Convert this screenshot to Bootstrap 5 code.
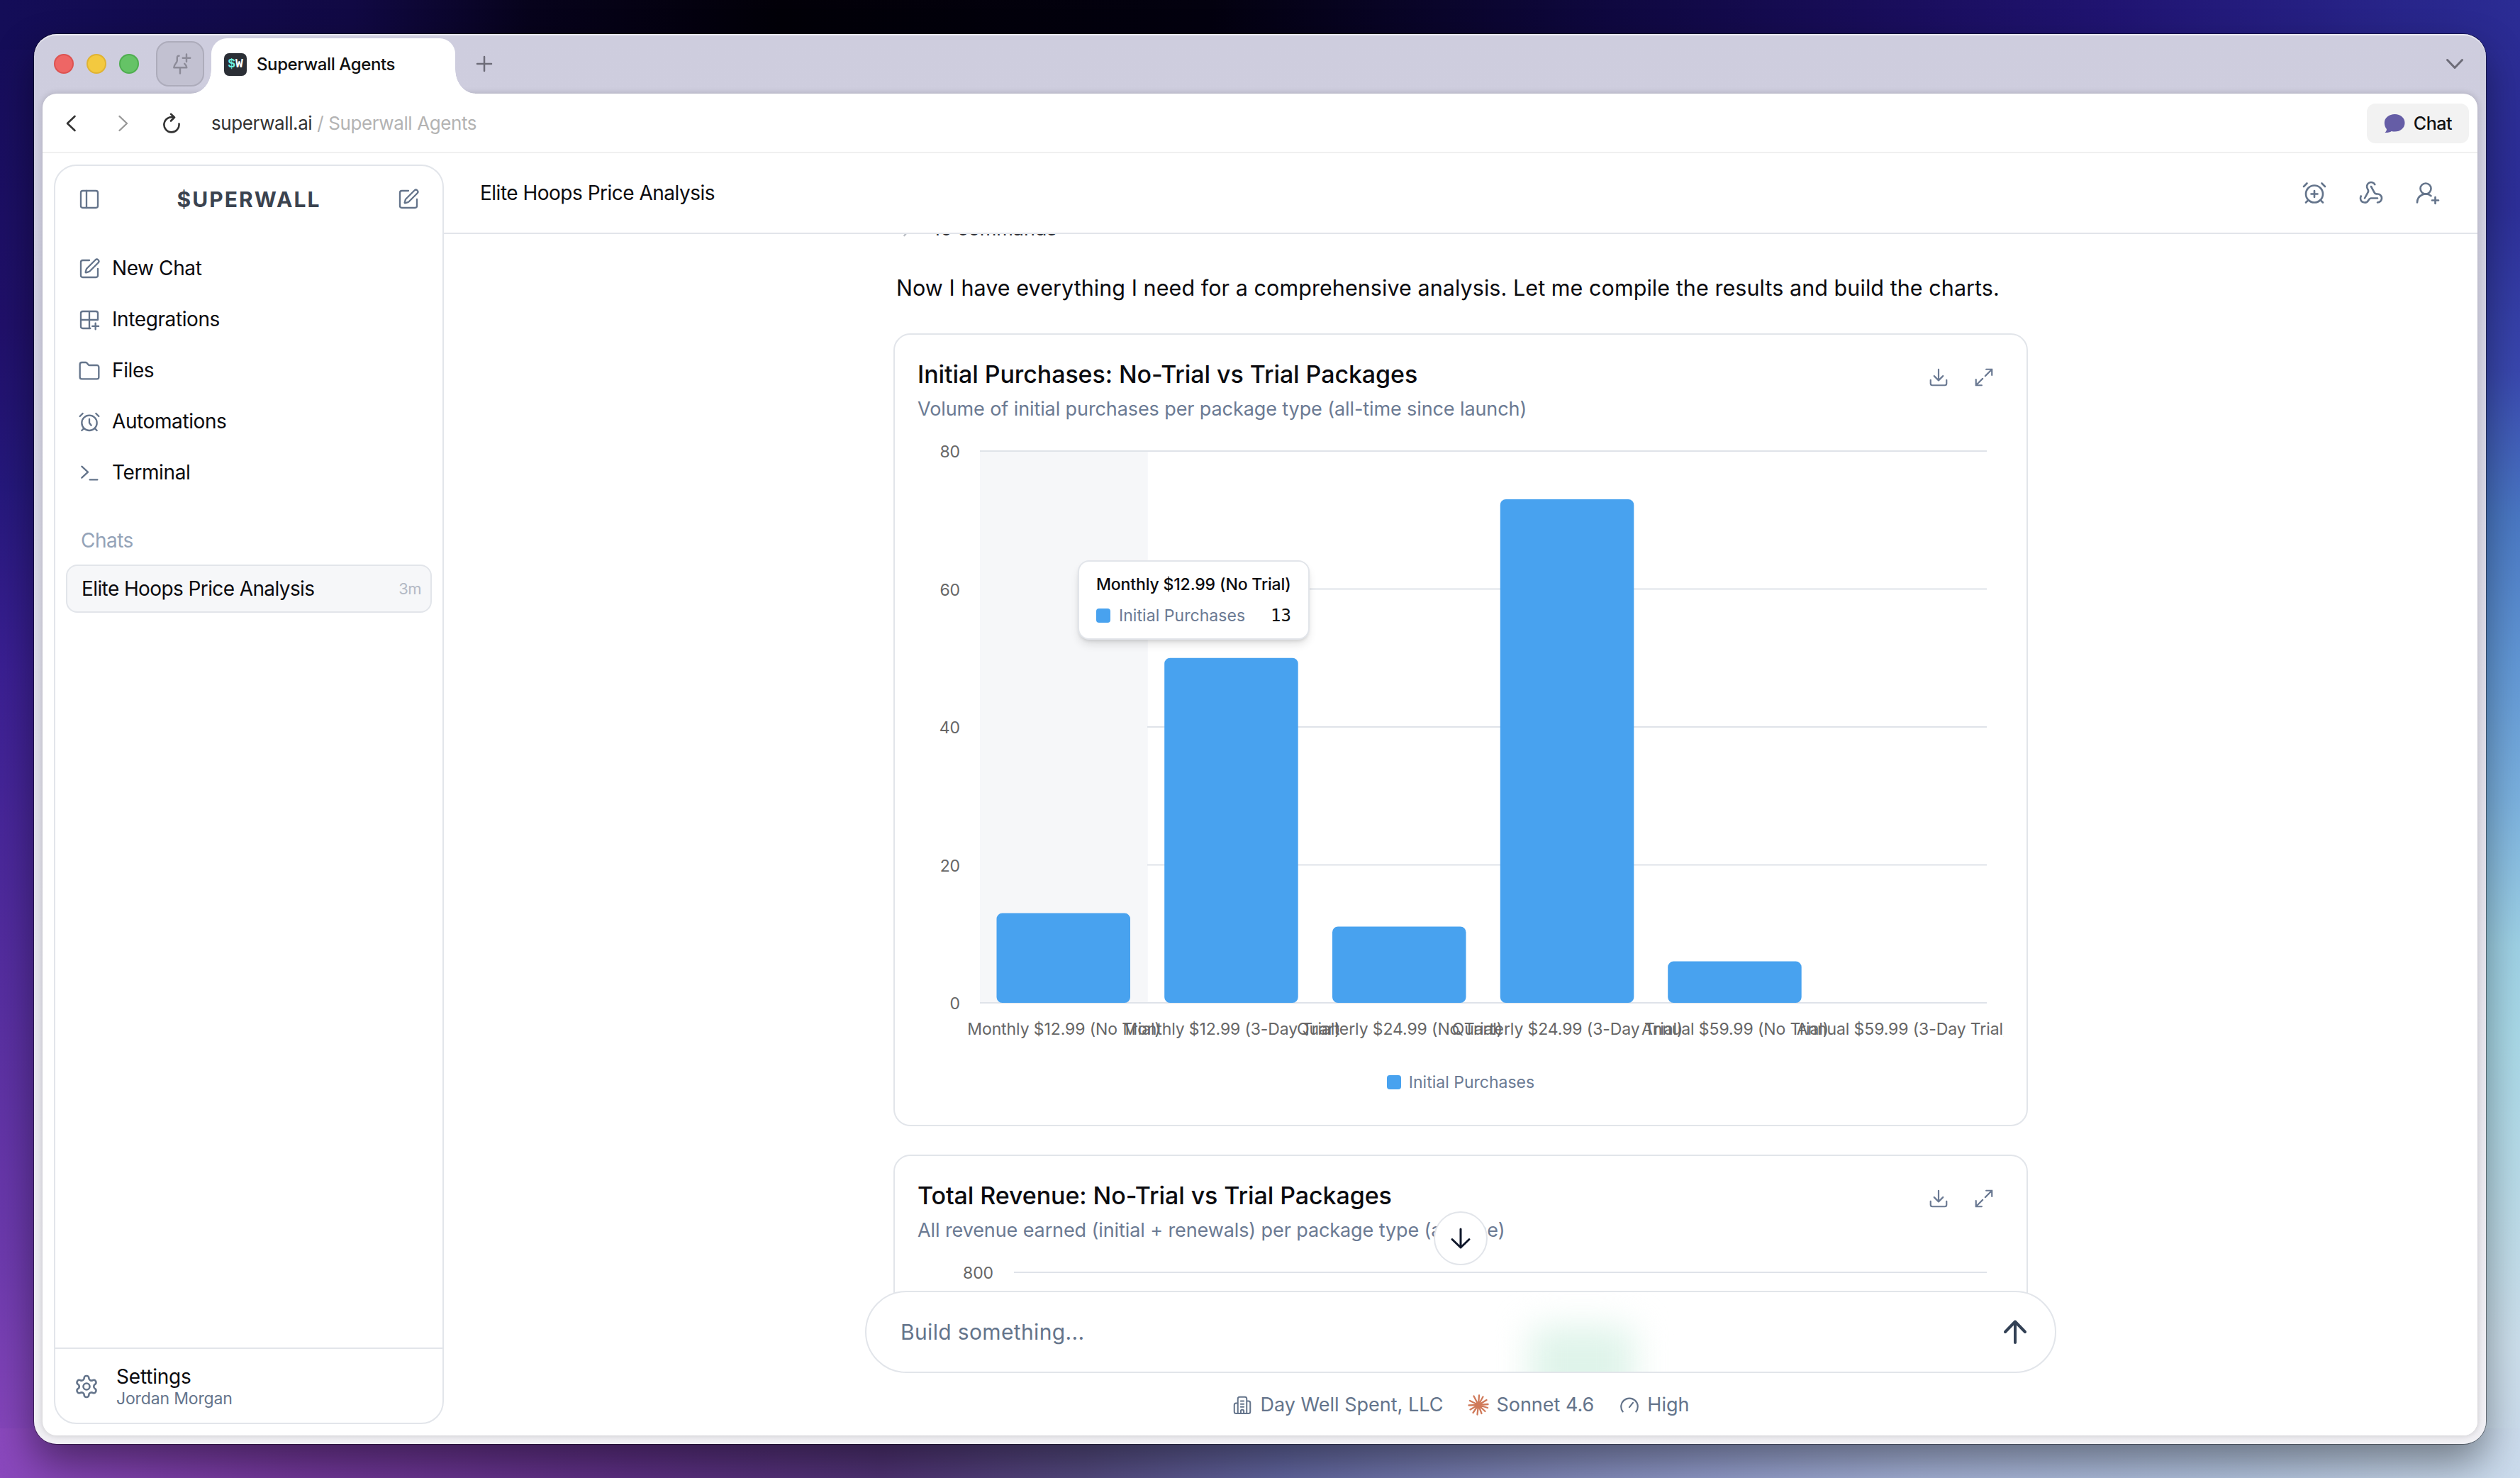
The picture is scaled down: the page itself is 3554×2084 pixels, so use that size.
<!DOCTYPE html>
<html lang="en">
<head>
<meta charset="utf-8">
<title>Superwall Agents</title>
<link href="https://cdn.jsdelivr.net/npm/bootstrap@5.3.0/dist/css/bootstrap.min.css" rel="stylesheet">
<style>
:root{--line:#e2e5ea;--slate:#64748b;--ink:#0b0b0f}
html,body{height:100%;overflow:hidden}
body{font-family:Inter,"Liberation Sans",sans-serif;color:var(--ink);font-size:28px;line-height:1.3;letter-spacing:-.5px;
background:
 linear-gradient(90deg,#140d58 0,#110944 14%,#07031c 21%,#020008 31%,#03010f 48%,#0f0840 64%,#1a0e5e 76%,#201472 84%,#2b2c94 100%) top/100% 70px no-repeat,
 linear-gradient(90deg,#8a48bd 0,#74389c 11%,#5d2f84 25%,#4f3274 35%,#544a80 43%,#6266a0 51%,#7d84b6 60%,#929ccb 68%,#a5b2d8 76%,#b3c4e0 88%,#cbdbec 100%) bottom/100% 70px no-repeat,
 linear-gradient(180deg,#140d58 0,#20106a 22%,#25187c 33%,#3a1f92 45%,#5a30a2 70%,#6d3aad 85%,#8a48bd 100%) left/70px 100% no-repeat,
 linear-gradient(180deg,#2b2c94 0,#2d2f99 14%,#3947ae 25%,#4a78c4 35%,#6298d6 45%,#7bb1df 54%,#9fd2e6 64%,#a9d9e8 70%,#bcdce9 82%,#ccdfec 91%,#cbdbec 100%) right/70px 100% no-repeat,#222}
svg{display:block;flex:none}
.ico{fill:none;stroke:currentColor;stroke-width:1.75;stroke-linecap:round;stroke-linejoin:round}
.win{margin:48px;width:3458px;height:1988px;border-radius:32px;background:linear-gradient(180deg,#cecdde 0,#cfcedf 20%,#dedde7 55%,#f1f0f4 100%);
 box-shadow:inset 0 2px 0 rgba(255,255,255,.55),0 0 0 1px rgba(0,0,0,.4),0 26px 56px rgba(0,0,0,.42)}
.tabbar{height:84px;padding:0 28px}
.light{width:28px;height:28px;border-radius:50%;margin-right:18px}
.pin{width:68px;height:64px;margin-left:6px;border-radius:18px;background:#c2c1d1;border:2px solid #adacbb;color:#8c8b98}
.tab{width:344px;height:78px;margin:6px 0 0 10px;padding:0 18px 5px;background:#fff;border-radius:22px 22px 0 0;font-size:24px;font-weight:500;letter-spacing:-.4px;color:#111}
.tab:before,.tab:after{content:"";position:absolute;bottom:0;width:28px;height:34px}
.tab:before{left:-28px;background:radial-gradient(ellipse 28px 34px at 0 0,transparent 98%,#fff 100%)}
.tab:after{right:-28px;background:radial-gradient(ellipse 28px 34px at 100% 0,transparent 98%,#fff 100%)}
.fav{width:32px;height:32px;border-radius:7px;background:#2b2f36;color:#fff;font:700 18px/31px "Liberation Mono",monospace;letter-spacing:0;margin-right:6px}
.fav b{color:#6df0e0}
.page{margin:0 12px 12px;border-radius:20px;background:#fff;box-shadow:0 0 10px rgba(0,0,0,.18)}
.urlbar{height:84px;border-bottom:2px solid #f0f0f0;font-size:26px;letter-spacing:-.4px;padding:2px 12px 0 26px;color:#333;flex:none}
.url-muted{color:#b3b3b3}
.chatbtn{width:144px;height:56px;border-radius:12px;background:#f2f2f2;font-size:25px;font-weight:500;color:#111}
.side{width:550px;margin:16px 0;border:2px solid var(--line);border-radius:32px;flex:none}
.side-top{height:94px;padding:0 32px;color:var(--slate)}
.logo{font-size:30px;font-weight:700;letter-spacing:2.1px;color:#3b434f}
.nav-row{height:72px;padding:1px 0 0 32px;gap:16px;letter-spacing:-.4px}
.nav-row svg{color:var(--slate)}
.chats-lbl{height:48px;margin-top:36px;padding:1px 0 0 36px;color:#94a3b8}
.chat-item{height:68px;margin:10px 15px 0;padding:0 13px 0 20px;border:2px solid var(--line);border-radius:16px;background:#f6f7f9;letter-spacing:-.6px}
.ago{font-size:22px;color:#b4bac5}
.side-foot{height:106px;border-top:2px solid var(--line);padding:1px 0 0 26px;gap:24px;color:var(--slate)}
.user-nm{font-size:23px;line-height:28px;letter-spacing:-.15px}
.top{height:114px;border-bottom:2px solid var(--line);padding:0 52px 0 51px;flex:none}
.top-ic{gap:44px;color:var(--slate)}
.thread{overflow:hidden}
.col-main{width:1600px;margin:0 auto}
.cmds{height:36px;line-height:36px;margin-top:-25px;font-size:27px;color:#303136;gap:25px;padding-left:8px;letter-spacing:-.1px}
.msg{height:48px;line-height:48px;margin:41px 0 40px 4px;font-size:30.5px;letter-spacing:.06px;white-space:nowrap}
.ccard{border:2px solid var(--line);border-radius:24px;margin-bottom:40px;background:#fff}
.chead{height:128px;padding:34px 45px 0 32px}
.ctitle{font-size:34px;line-height:44px;font-weight:450;letter-spacing:-.08px}
.csub{font-size:27px;line-height:36px;margin-top:9px;color:#6b7a93;letter-spacing:-.1px}
.cact{gap:34px;padding-top:11px;color:#6b7a93}
.ax{font:23px Inter,sans-serif;letter-spacing:-.1px;fill:#666}
.gl{stroke:#dfe3e9;stroke-width:2}
.legend{height:86px;padding-top:6px;font-size:23px;letter-spacing:0;color:#6b7a93;gap:11px;line-height:40px}
.sw{width:20px;height:20px;border-radius:4px;background:#48a2ef;display:inline-block}
.tip{left:258px;top:318px;width:327px;height:112px;border:2px solid var(--line);border-radius:16px;background:#fff;padding:13px 24px 0 24px;font-size:23px;box-shadow:0 8px 14px -3px rgba(0,0,0,.14),0 3px 5px -2px rgba(0,0,0,.12)}
.tip-t{font-weight:500;line-height:38px;letter-spacing:-.15px}
.tip-r{line-height:44px;color:#6b7a93;letter-spacing:.05px;gap:12px;margin-top:3px}
.tip-v{font-family:"DejaVu Sans Mono",monospace;font-size:24px;color:#111}
.dock{height:146px;background:#fff;flex:none}
.pill{width:1680px;height:116px;margin:-58px auto 0;border:2px solid var(--line);border-radius:58px;overflow:hidden;
 background:#fff;padding:0 36px 0 48px;font-size:30px;letter-spacing:.35px;color:#64748b}
.glow{left:936px;top:48px;width:146px;height:120px;border-radius:16px;background:#dff4ea;filter:blur(24px)}
.down{width:76px;height:76px;left:50%;bottom:240px;transform:translateX(-50%);border:2px solid var(--line);background:#fff;color:#0f172a}
.meta{height:40px;margin-top:25px;gap:35px;color:var(--slate);font-size:27px;letter-spacing:0}
.meta span{gap:10px}
</style>
<script src="https://cdn.jsdelivr.net/npm/bootstrap@5.3.0/dist/js/bootstrap.bundle.min.js"></script>
</head>
<body>
<svg width="0" height="0" class="position-absolute">
 <defs>
 <symbol id="edit" viewBox="0 0 24 24"><path d="M12 3H5a2 2 0 0 0-2 2v14a2 2 0 0 0 2 2h14a2 2 0 0 0 2-2v-7M18.375 2.625a1 1 0 0 1 3 3l-9.013 9.014a2 2 0 0 1-.853.505l-2.873.84a.5.5 0 0 1-.62-.62l.84-2.873a2 2 0 0 1 .506-.852z"/></symbol>
 <symbol id="dl" viewBox="0 0 24 24"><path d="M12 3v12M7 10.500l5 5 5-5M3 15v4a2 2 0 0 0 2 2h14a2 2 0 0 0 2-2v-4"/></symbol>
 <symbol id="ex" viewBox="0 0 24 24"><path d="M14.500 3H21v6.500M21 3l-7.500 7.500M9.500 21H3v-6.500M3 21l7.500-7.500"/></symbol>
 <symbol id="clock" viewBox="0 0 24 24"><circle cx="12" cy="13" r="8"/><path d="M5 3 2 6M22 6l-3-3M6.380 18.700 4 21M17.640 18.670 20 21"/></symbol>
 </defs>
</svg>
<div class="win d-flex flex-column">
 <div class="tabbar d-flex align-items-center flex-shrink-0">
  <div class="light" style="background:#ee6665;border:2px solid #dd5351"></div>
  <div class="light" style="background:#f3c93f;border:2px solid #e0b332"></div>
  <div class="light" style="background:#65c366;border:2px solid #4fae50"></div>
  <div class="pin d-flex align-items-center justify-content-center">
   <svg class="ico" width="36" height="36" viewBox="0 0 24 24" style="stroke-width:1.6"><path d="M11 4.500c-1.500 0-1.800.5-1.800 2V9c0 2-3 3.500-3 6.500h12c0-1.700-1-2.700-2-3.600M12 15.500V21M18 3v7M14.500 6.500h7"/></svg>
  </div>
  <div class="tab position-relative d-flex align-items-center gap-2">
   <div class="fav d-flex justify-content-center"><b>$</b>W</div><span>Superwall Agents</span>
  </div>
  <svg class="ico" width="32" height="32" viewBox="0 0 32 32" style="stroke:#6d6c78;stroke-width:2.500;margin-left:25px"><path d="M16 6v20M6 16h20"/></svg>
  <svg class="ico ms-auto" width="32" height="32" viewBox="0 0 32 32" style="stroke:#6d6c78;stroke-width:3"><path d="M5.500 10.500 16 21.500l10.500-11"/></svg>
 </div>
 <div class="page d-flex flex-column flex-grow-1 overflow-hidden">
  <div class="urlbar d-flex align-items-center">
   <svg class="ico" width="28" height="28" viewBox="0 0 28 28" style="stroke-width:2.600;stroke:#333"><path d="M19.500 4 9 14 19.500 24"/></svg>
   <svg class="ico" width="28" height="28" viewBox="0 0 28 28" style="stroke-width:2.400;stroke:#999;margin-left:46px"><path d="M8.500 4 19 14 8.500 24"/></svg>
   <svg class="ico" width="30" height="30" viewBox="0 0 30 30" style="stroke-width:2.600;stroke:#333;margin-left:39px"><path d="M25.500 15.500A10.600 10.600 0 1 1 18 6.600M14 1.800l5 4.700-5 5"/></svg>
   <span style="margin-left:41px">superwall.ai</span><span class="url-muted" style="margin:0 7px">/</span><span class="url-muted">Superwall Agents</span>
   <div class="chatbtn ms-auto d-flex align-items-center justify-content-center">
    <svg width="30" height="28" viewBox="0 0 30 28" style="margin-right:12px"><path fill="#655da6" d="M15.500 1C23.500 1 29.500 6 29.500 13.200S23.500 25.500 15.500 25.500c-1.700 0-3.200-.2-4.700-.6C8.500 26.500 5 27.300 1.500 27c1.800-1.600 2.600-3.300 2.400-5C2 19.700.800 16.700.800 13.200.800 6 7.300 1 15.500 1z"/></svg>Chat
   </div>
  </div>
  <div class="d-flex flex-grow-1 overflow-hidden" style="padding-left:16px">
   <aside class="side d-flex flex-column">
    <div class="side-top d-flex align-items-center justify-content-between">
     <svg class="ico" width="32" height="32" viewBox="0 0 24 24"><rect x="3" y="3" width="18" height="18" rx="2"/><path d="M9 3v18"/></svg>
     <span class="logo">$UPERWALL</span>
     <svg class="ico" width="32" height="32"><use href="#edit"/></svg>
    </div>
    <nav style="margin-top:14px">
     <div class="nav-row d-flex align-items-center"><svg class="ico" width="32" height="32"><use href="#edit"/></svg>New Chat</div>
     <div class="nav-row d-flex align-items-center"><svg class="ico" width="32" height="32" viewBox="0 0 24 24"><path d="M13 21H5a2 2 0 0 1-2-2V5a2 2 0 0 1 2-2h14a2 2 0 0 1 2 2v7H3M12 3v18M18.500 15.500v6.500M15.200 18.700h6.600"/></svg>Integrations</div>
     <div class="nav-row d-flex align-items-center"><svg class="ico" width="32" height="32" viewBox="0 0 24 24"><path d="M20 20.500H4a2 2 0 0 1-2-2V5a2 2 0 0 1 2-2h4a2 2 0 0 1 1.700.9l.9 1.200a2 2 0 0 0 1.700.9H20a2 2 0 0 1 2 2v10.500a2 2 0 0 1-2 2z"/></svg>Files</div>
     <div class="nav-row d-flex align-items-center"><svg class="ico" width="32" height="32" viewBox="0 0 24 24"><use href="#clock"/><path d="M12 9v4l2 2.500"/></svg>Automations</div>
     <div class="nav-row d-flex align-items-center"><svg class="ico" width="32" height="32" viewBox="0 0 24 24"><path d="M4 5l6.500 6L4 17M12.500 19H20.500"/></svg>Terminal</div>
    </nav>
    <div class="chats-lbl d-flex align-items-center">Chats</div>
    <div class="chat-item d-flex align-items-center justify-content-between"><span>Elite Hoops Price Analysis</span><span class="ago">3m</span></div>
    <div class="side-foot d-flex align-items-center mt-auto">
     <svg class="ico" width="36" height="36" viewBox="0 0 24 24"><path d="M12.220 2h-.44a2 2 0 0 0-2 2v.18a2 2 0 0 1-1 1.730l-.43.25a2 2 0 0 1-2 0l-.15-.08a2 2 0 0 0-2.730.730l-.22.38a2 2 0 0 0 .730 2.730l.15.1a2 2 0 0 1 1 1.720v.51a2 2 0 0 1-1 1.740l-.15.09a2 2 0 0 0-.730 2.730l.22.38a2 2 0 0 0 2.730.730l.15-.08a2 2 0 0 1 2 0l.43.25a2 2 0 0 1 1 1.730V20a2 2 0 0 0 2 2h.44a2 2 0 0 0 2-2v-.18a2 2 0 0 1 1-1.730l.43-.25a2 2 0 0 1 2 0l.15.08a2 2 0 0 0 2.730-.730l.22-.39a2 2 0 0 0-.730-2.730l-.15-.08a2 2 0 0 1-1-1.740v-.5a2 2 0 0 1 1-1.740l.15-.09a2 2 0 0 0 .730-2.730l-.22-.38a2 2 0 0 0-2.730-.730l-.15.08a2 2 0 0 1-2 0l-.43-.25a2 2 0 0 1-1-1.730V4a2 2 0 0 0-2-2z"/><circle cx="12" cy="12" r="3"/></svg>
     <div><div style="line-height:34px;color:#0b0b0f;letter-spacing:-.2px">Settings</div><div class="user-nm">Jordan Morgan</div></div>
    </div>
   </aside>
   <main class="d-flex flex-column flex-grow-1 position-relative">
    <div class="top d-flex align-items-center justify-content-between">
     <span>Elite Hoops Price Analysis</span>
     <div class="top-ic d-flex">
      <svg class="ico" width="36" height="36" viewBox="0 0 24 24"><use href="#clock"/><path d="M12 10v6M9 13h6"/></svg>
      <svg class="ico" width="36" height="36" viewBox="0 0 24 24"><path d="M18 16.980h-5.990c-1.100 0-1.950.94-2.480 1.900A4 4 0 0 1 2 17c.01-.7.2-1.400.57-2M6 17l3.130-5.780c.53-.97.1-2.180-.5-3.100a4 4 0 1 1 6.890-4.060M12 6l3.130 5.730C15.660 12.700 16.900 13 18 13a4 4 0 0 1 0 8"/></svg>
      <svg class="ico" width="36" height="36" viewBox="0 0 24 24"><path d="M2 21a8 8 0 0 1 13-6.200M19 16v6M22 19h-6"/><circle cx="10" cy="8" r="5"/></svg>
     </div>
    </div>
    <div class="thread flex-grow-1">
     <div class="col-main">
      <div class="cmds d-flex align-items-center"><svg class="ico" width="22" height="22" viewBox="0 0 24 24" style="stroke:#b9bdc4;stroke-width:2.500"><path d="M8 4l8 9-8 9"/></svg>10 commands</div>
      <div class="msg">Now I have everything I need for a comprehensive analysis. Let me compile the results and build the charts.</div>
      <section class="ccard position-relative">
       <div class="chead d-flex justify-content-between">
        <div><div class="ctitle">Initial Purchases: No-Trial vs Trial Packages</div><div class="csub">Volume of initial purchases per package type (all-time since launch)</div></div>
        <div class="cact d-flex"><svg class="ico" width="30" height="30"><use href="#dl"/></svg><svg class="ico" width="30" height="30"><use href="#ex"/></svg></div>
       </div>
       <svg width="1596" height="900" viewBox="1262 600 1596 900">
        <clipPath id="cp"><rect x="1263" y="600" width="1563" height="900"/></clipPath>
        <rect x="1382" y="636" width="236.700" height="778" fill="#f6f7f9"/>
        <g class="gl"><path d="M1382 636H2802M1618 830.500H2802M1618 1025H2802M1618 1219.500H2802M1382 1414H2802"/></g>
        <g fill="#48a2ef">
         <rect x="1405.500" y="1287.600" width="188.500" height="126.400" rx="8"/>
         <rect x="1642.200" y="927.700" width="188.500" height="486.300" rx="8"/>
         <rect x="1879" y="1306.500" width="188.500" height="107.500" rx="8"/>
         <rect x="2115.800" y="704" width="188.500" height="710" rx="8"/>
         <rect x="2352.200" y="1355.600" width="188.500" height="58.400" rx="8"/>
        </g>
        <g class="ax" text-anchor="end"><text x="1354" y="645">80</text><text x="1354" y="839.500">60</text><text x="1354" y="1034">40</text><text x="1354" y="1228.500">20</text><text x="1354" y="1423">0</text></g>
        <g class="ax" text-anchor="middle" clip-path="url(#cp)">
         <text x="1500.500" y="1459">Monthly $12.99 (No Trial)</text>
         <text x="1737" y="1459" textLength="307">Monthly $12.99 (3-Day Trial)</text>
         <text x="1974" y="1459">Quarterly $24.99 (No Trial)</text>
         <text x="2210.500" y="1459">Quarterly $24.99 (3-Day Trial)</text>
         <text x="2447" y="1459">Annual $59.99 (No Trial)</text>
         <text x="2683.500" y="1459">Annual $59.99 (3-Day Trial)</text>
        </g>
       </svg>
       <div class="legend d-flex justify-content-center"><span class="sw" style="margin-top:10px"></span>Initial Purchases</div>
       <div class="tip position-absolute">
        <div class="tip-t">Monthly $12.99 (No Trial)</div>
        <div class="tip-r d-flex align-items-center"><span class="sw"></span>Initial Purchases<span class="tip-v ms-auto">13</span></div>
       </div>
      </section>
      <section class="ccard">
       <div class="chead d-flex justify-content-between">
        <div><div class="ctitle">Total Revenue: No-Trial vs Trial Packages</div><div class="csub">All revenue earned (initial + renewals) per package type (all-time)</div></div>
        <div class="cact d-flex"><svg class="ico" width="30" height="30"><use href="#dl"/></svg><svg class="ico" width="30" height="30"><use href="#ex"/></svg></div>
       </div>
       <svg width="1596" height="400" viewBox="1262 1758 1596 400"><path class="gl" d="M1430 1794H2802"/><text class="ax" x="1401" y="1803" text-anchor="end">800</text></svg>
      </section>
     </div>
    </div>
    <div class="dock">
     <div class="pill d-flex align-items-center justify-content-between position-relative">
      <div class="glow position-absolute"></div>
      <span>Build something...</span>
      <svg class="ico" width="40" height="40" viewBox="0 0 40 40" style="stroke:#334155;stroke-width:4"><path d="M20 35V5.500M6 20 20 5.500 34 20"/></svg>
     </div>
     <div class="meta d-flex align-items-center justify-content-center">
      <span class="d-flex align-items-center"><svg class="ico" width="30" height="30" viewBox="0 0 24 24" style="stroke-width:1.600"><path d="M7 21.500V5a2 2 0 0 1 2-2h6a2 2 0 0 1 2 2v16.500M7 10H5a2 2 0 0 0-2 2v7.500a2 2 0 0 0 2 2h14a2 2 0 0 0 2-2V9.500a2 2 0 0 0-2-2h-2M10.300 7.500h3.400M10.300 11h3.400M10.300 14.200h3.400M10.300 21.500V19a1.700 1.700 0 0 1 3.400 0v2.500"/></svg>Day Well Spent, LLC</span>
      <span class="d-flex align-items-center"><svg width="30" height="30" viewBox="-15 -15 30 30" stroke="#d07a5a" stroke-width="2.300" stroke-linecap="round"><path d="M0 0 1-13.500M0 0 6.500-11.500M0 0 11.500-7M0 0 13.500-1M0 0 13 4M0 0 9.500 9M0 0 4.500 12M0 0-1.500 13.500M0 0-7.500 11M0 0-11.500 6.500M0 0-13.500.5M0 0-12-6M0 0-6.500-12.500"/></svg>Sonnet 4.6</span>
      <span class="d-flex align-items-center"><svg class="ico" width="30" height="30" viewBox="0 0 24 24"><path d="M4.500 19.500a9.400 9.400 0 1 1 15 0M12 14.500 16 9.500"/></svg>High</span>
     </div>
    </div>
    <button class="down btn p-0 rounded-circle position-absolute d-flex align-items-center justify-content-center"><svg class="ico" width="36" height="36" viewBox="0 0 36 36" style="stroke-width:3"><path d="M18 5v26M6 19.500 18 31l12-11.500"/></svg></button>
   </main>
  </div>
 </div>
</div>
</body>
</html>
